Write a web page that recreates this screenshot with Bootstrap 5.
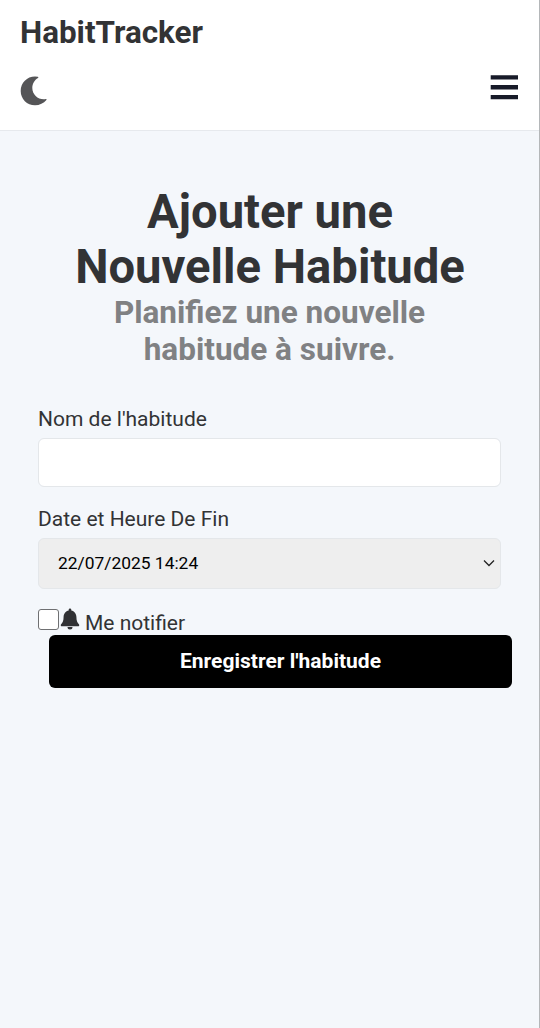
<!DOCTYPE html>
<html lang="fr">
<head>
<meta charset="utf-8">
<meta name="viewport" content="width=device-width, initial-scale=1">
<title>HabitTracker</title>
<link href="https://cdn.jsdelivr.net/npm/bootstrap@5.3.0/dist/css/bootstrap.min.css" rel="stylesheet">
<style>
  body { font-family: Roboto, sans-serif; font-size: 21px; line-height: 32px; color: #323335; background: #f4f7fb; }
  .page { min-height: 100vh; border-right: 1px solid #b4b7b9; }
  .top-bar { height: 131px; padding: 12px 20px 0; border-bottom: 1px solid #e6e9ed; }
  .brand { font-size: 31.4px; line-height: 42px; color: #323335; }
  .tools { margin-top: 18px; }
  .habit-form { padding: 0 38px; }
  .title { font-size: 47.2px; line-height: 55px; margin-top: 54px; padding-left: 1px; }
  .subtitle { font-size: 31.5px; line-height: 37px; color: #808183; margin-top: -1px; }
  .field { border: 1px solid #e4e7ea; border-radius: 6px; box-shadow: none; }
  .name-field { height: 49px; }
  .date-field { height: 51px; background: #eee; color: #000; font-size: 17.4px; line-height: 30px; padding: 0 5px 2px 19px; }
  .notify { height: 30px; }
  .habit-form .notify-box { width: 21px; height: 21px; margin: 4px 0 0; border: 1px solid #6f7072; border-radius: 3px; background: #fff; }
  .save { height: 53px; margin: 0 -11px 0 11px; background: #000; color: #fff; font-size: 21px; border: 0; border-radius: 6px; padding: 0; }
</style>
</head>
<body>
<div class="page">
  <header class="top-bar bg-white">
    <a class="brand d-block fw-bold text-decoration-none" href="#">HabitTracker</a>
    <div class="tools d-flex justify-content-between align-items-start">
      <svg width="28" height="30" viewBox="0 0 28 30" style="margin-top:4px" aria-hidden="true"><path fill="#555557" d="M15 .5C7 .5.7 6.900.7 14.900s6.300 14.400 14.300 14.400c4.600 0 8.700-2.100 11.400-5.300.4-.5 0-1-.6-.9C18.800 24.400 12.300 19 12.300 12c0-4.200 2.200-8 5.700-10 .6-.3.400-1.100-.2-1.200A15 15 0 0 0 15 .5Z"/></svg>
      <svg width="28" height="26" viewBox="0 0 28 26" style="margin-top:2px;margin-right:1px" aria-hidden="true"><path fill="#181b29" d="M.7 1.200h27.300v4.300H.7zM.7 11.100h27.300v4.300H.7zM.7 21h27.300v4.300H.7z"/></svg>
    </div>
  </header>
  <main class="habit-form">
    <h1 class="title text-center fw-bold mb-0">Ajouter une<br>Nouvelle Habitude</h1>
    <h2 class="subtitle text-center fw-bold mb-0">Planifiez une nouvelle<br>habitude à suivre.</h2>
    <form>
      <label class="d-block" for="name" style="margin-top:35px">Nom de l'habitude</label>
      <input id="name" class="field name-field form-control" style="margin-top:3px">
      <label class="d-block" style="margin-top:16px">Date et Heure De Fin</label>
      <div class="field date-field d-flex align-items-center justify-content-between" style="margin-top:3px">
        <span>22/07/2025 14:24</span>
        <svg width="12" height="8" viewBox="0 0 12 8" fill="none" stroke="#222" stroke-width="1.300" aria-hidden="true"><path d="m1 1.500 5 5 5-5"/></svg>
      </div>
      <div class="notify d-flex align-items-start" style="margin-top:16px">
        <input id="notify" type="checkbox" class="notify-box form-check-input">
        <svg width="20" height="22" viewBox="0 0 20 22" style="margin:3px 0 0 1px" aria-hidden="true"><path fill="#303134" d="M10 .5c.8 0 1.300.6 1.300 1.300v.6c3 .6 5.100 3.200 5.100 6.400 0 4.200 1 6 2.500 7.400.8.9.2 2.100-.9 2.100H2c-1.100 0-1.700-1.200-.9-2.100 1.500-1.400 2.500-3.200 2.500-7.400 0-3.200 2.100-5.800 5.100-6.400v-.6C8.700 1.100 9.200.5 10 .5ZM7.500 19h5a2.500 2.500 0 0 1-5 0Z"/></svg>
        <label for="notify" style="margin:2px 0 0 5px">Me notifier</label>
      </div>
      <div class="d-flex"><button type="button" class="save btn fw-bold flex-fill">Enregistrer l'habitude</button></div>
    </form>
  </main>
</div>
<script src="https://cdn.jsdelivr.net/npm/bootstrap@5.3.0/dist/js/bootstrap.bundle.min.js"></script>
</body>
</html>
